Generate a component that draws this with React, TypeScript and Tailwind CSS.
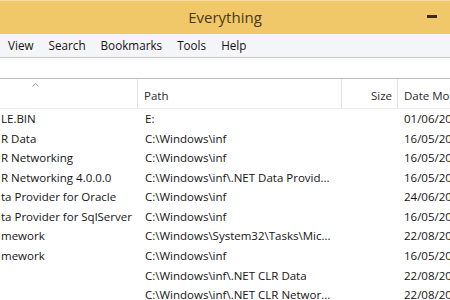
import React from 'react';

const ROWS = [
  { name: 'LE.BIN', path: 'E:', date: '01/06/2013' },
  { name: 'R Data', path: 'C:\\Windows\\inf', date: '16/05/2013' },
  { name: 'R Networking', path: 'C:\\Windows\\inf', date: '16/05/2013' },
  { name: 'R Networking 4.0.0.0', path: 'C:\\Windows\\inf\\.NET Data Provid...', date: '16/05/2013' },
  { name: 'ta Provider for Oracle', path: 'C:\\Windows\\inf', date: '24/06/2013' },
  { name: 'ta Provider for SqlServer', path: 'C:\\Windows\\inf', date: '16/05/2013' },
  { name: 'mework', path: 'C:\\Windows\\System32\\Tasks\\Mic...', date: '22/08/2013' },
  { name: 'mework', path: 'C:\\Windows\\inf', date: '16/05/2013' },
  { name: '', path: 'C:\\Windows\\inf\\.NET CLR Data', date: '22/08/2013' },
  { name: '', path: 'C:\\Windows\\inf\\.NET CLR Networ...', date: '22/08/2013' },
];

const MENU = ['View', 'Search', 'Bookmarks', 'Tools', 'Help'];

export default function App() {
  return (
    <div className="w-[450px] h-[300px] overflow-hidden bg-white text-[#141414] font-['Open_Sans','Noto_Sans',sans-serif] text-[11.5px]">
      {/* title bar */}
      <div className="relative h-[34px] bg-[#f0c86a] border-t border-[#f6dc9c] flex items-center justify-center">
        <span className="text-[15px] text-[#4b3a16]">Everything</span>
        <span className="absolute left-[427px] top-[14px] w-[10px] h-[3px] bg-[#3c2c10]" />
      </div>

      {/* menu */}
      <div className="h-[24px] bg-[#f4f5f8] border-b border-[#c9c9c9] flex items-center pl-[8px] gap-[15px] text-[11.7px]">
        {MENU.map(m => <span key={m}>{m}</span>)}
      </div>

      {/* search box */}
      <div className="h-[21px] bg-white border-b border-[#bdbdbd]" />

      {/* header */}
      <div className="relative h-[30px] flex border-b border-[#ececec] text-[#2a2a2a]">
        <div className="w-[138px] shrink-0 border-r border-[#e3e3e3]" />
        <svg className="absolute left-[32px] top-[4px]" width="7" height="4" viewBox="0 0 7 4">
          <path d="M0.5 3.5 L3.5 0.5 L6.5 3.5" fill="none" stroke="#9a9a9a" strokeWidth="1" />
        </svg>
        <div className="w-[204px] shrink-0 border-r border-[#e3e3e3] pl-[6px] pt-[8px]">Path</div>
        <div className="w-[56px] shrink-0 border-r border-[#e3e3e3] text-right pr-[5px] pt-[8px]">Size</div>
        <div className="flex-1 pl-[6px] pt-[8px] whitespace-nowrap overflow-hidden">Date Modified</div>
      </div>

      {/* rows */}
      <div>
        {ROWS.map((r, i) => (
          <div key={i} className="h-[19.55px] flex items-center whitespace-nowrap">
            <div className="w-[138px] shrink-0 pl-[1px] overflow-hidden">{r.name}</div>
            <div className="w-[204px] shrink-0 pl-[7px] overflow-hidden">{r.path}</div>
            <div className="w-[56px] shrink-0" />
            <div className="flex-1 pl-[6px] overflow-hidden">{r.date}</div>
          </div>
        ))}
      </div>
    </div>
  );
}
